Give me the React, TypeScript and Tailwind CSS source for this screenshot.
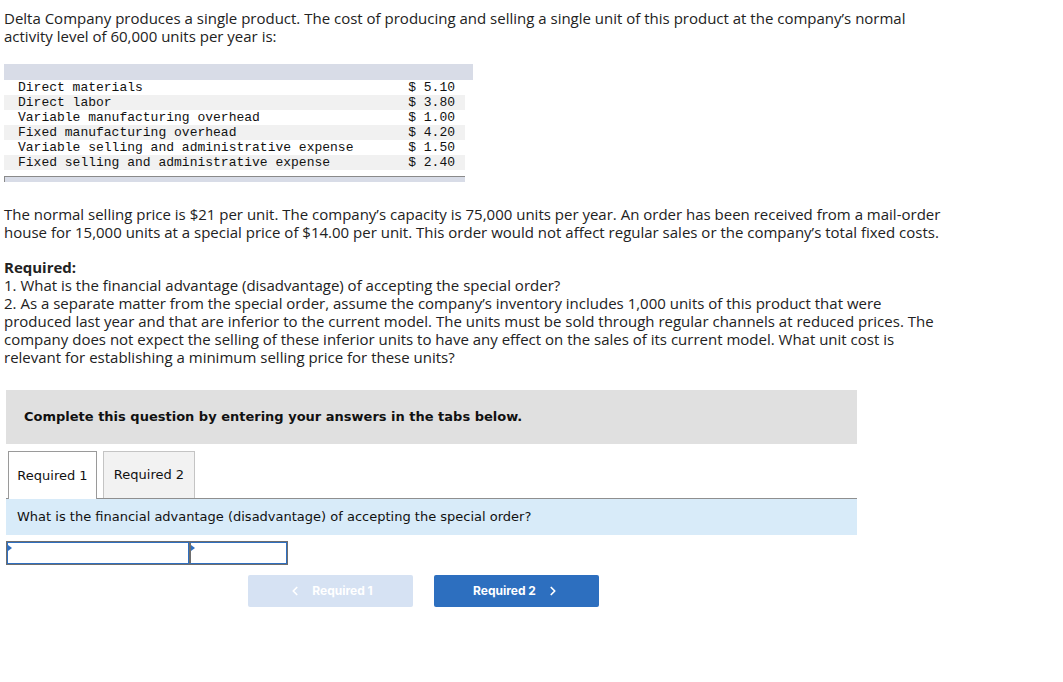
import { ChevronLeft, ChevronRight } from "lucide-react";

const costs = [
  { label: "Direct materials", value: "5.10" },
  { label: "Direct labor", value: "3.80" },
  { label: "Variable manufacturing overhead", value: "1.00" },
  { label: "Fixed manufacturing overhead", value: "4.20" },
  { label: "Variable selling and administrative expense", value: "1.50" },
  { label: "Fixed selling and administrative expense", value: "2.40" },
];

export default function App() {
  return (
    <div className="min-h-[682px] w-[1063px] bg-white pt-[9px] text-[15px] leading-[18px] text-[#222] [font-family:'Open_Sans','Liberation_Sans',sans-serif]">
      <p className="w-[955px] px-[4px]">
        Delta Company produces a single product. The cost of producing and selling a single unit of this product at the
        company’s normal activity level of 60,000 units per year is:
      </p>

      <div className="ml-[4px] mt-[19px] w-[469px]">
        <div className="h-[16px] bg-[#d8dce7]" />
        <table className="w-[461px] border-collapse text-[13px] leading-[15px] text-[#111] [font-family:'Liberation_Mono',monospace]">
          <tbody>
            {costs.map((row, i) => (
              <tr key={row.label} className={i % 2 === 1 ? "bg-[#f1f1f1]" : "bg-white"}>
                <td className="h-[15px] whitespace-nowrap py-0 pl-[14px]">{row.label}</td>
                <td className="w-[60px] whitespace-nowrap py-0 pr-[10px] text-right">$ {row.value}</td>
              </tr>
            ))}
          </tbody>
        </table>
        <div className="mt-[6px] h-[6px] w-[461px] border-l border-t border-[#8a8a8a] bg-[#d8dce7]" />
      </div>

      <p className="mt-[23px] w-[955px] px-[4px]">
        The normal selling price is $21 per unit. The company’s capacity is 75,000 units per year. An order has been
        received from a mail-order house for 15,000 units at a special price of $14.00 per unit. This order would not
        affect regular sales or the company’s total fixed costs.
      </p>

      <div className="mt-[17px] w-[955px] px-[4px]">
        <p className="font-bold">Required:</p>
        <p>1. What is the financial advantage (disadvantage) of accepting the special order?</p>
        <p>
          2. As a separate matter from the special order, assume the company’s inventory includes 1,000 units of this
          product that were produced last year and that are inferior to the current model. The units must be sold
          through regular channels at reduced prices. The company does not expect the selling of these inferior units to
          have any effect on the sales of its current model. What unit cost is relevant for establishing a minimum
          selling price for these units?
        </p>
      </div>

      <div className="ml-[6px] mt-[24px] w-[851px] [font-family:'DejaVu_Sans',Verdana,sans-serif]">
        <div className="flex h-[54px] items-center bg-[#e0e0e0] px-[18px] text-[13px] font-bold text-[#111]">
          Complete this question by entering your answers in the tabs below.
        </div>

        <div className="mt-[7px] flex gap-[6px] border-b border-[#8f8f8f] pl-[2px] text-[13px] text-[#111]">
          <div className="-mb-px flex h-[48px] w-[89px] items-center justify-center border border-b-0 border-[#9a9a9a] bg-white">
            Required 1
          </div>
          <div className="flex h-[47px] w-[92px] items-center justify-center border border-b-0 border-[#c4c4c4] bg-[#f2f2f2]">
            Required 2
          </div>
        </div>

        <div className="flex h-[36px] items-center bg-[#d8ebf9] px-[11px] text-[13px] text-[#111]">
          What is the financial advantage (disadvantage) of accepting the special order?
        </div>

        <div className="mt-[6px] flex w-[282px] border border-[#6e6e6e]">
          <div className="relative h-[22px] w-[182px] border border-[#2f6fc0]">
            <span className="absolute left-0 top-[2px] h-0 w-0 border-y-[3px] border-l-[4px] border-y-transparent border-l-[#2f6fc0]" />
          </div>
          <div className="relative h-[22px] flex-1 border border-l-2 border-[#2f6fc0] border-l-[#6e6e6e]">
            <span className="absolute left-0 top-[2px] h-0 w-0 border-y-[3px] border-l-[4px] border-y-transparent border-l-[#2f6fc0]" />
          </div>
        </div>

        <div className="mt-[10px] flex gap-[21px] pl-[242px] text-[12px] font-bold text-white [font-family:Inter,'Liberation_Sans',sans-serif]">
          <button
            type="button"
            className="flex h-[32px] w-[165px] items-center justify-center gap-[10px] rounded-[2px] bg-[#d6e2f3]"
          >
            <ChevronLeft size={14} strokeWidth={3} />
            Required 1
          </button>
          <button
            type="button"
            className="flex h-[32px] w-[165px] items-center justify-center gap-[10px] rounded-[2px] bg-[#2d6fbf]"
          >
            Required 2
            <ChevronRight size={14} strokeWidth={3} />
          </button>
        </div>
      </div>
    </div>
  );
}
